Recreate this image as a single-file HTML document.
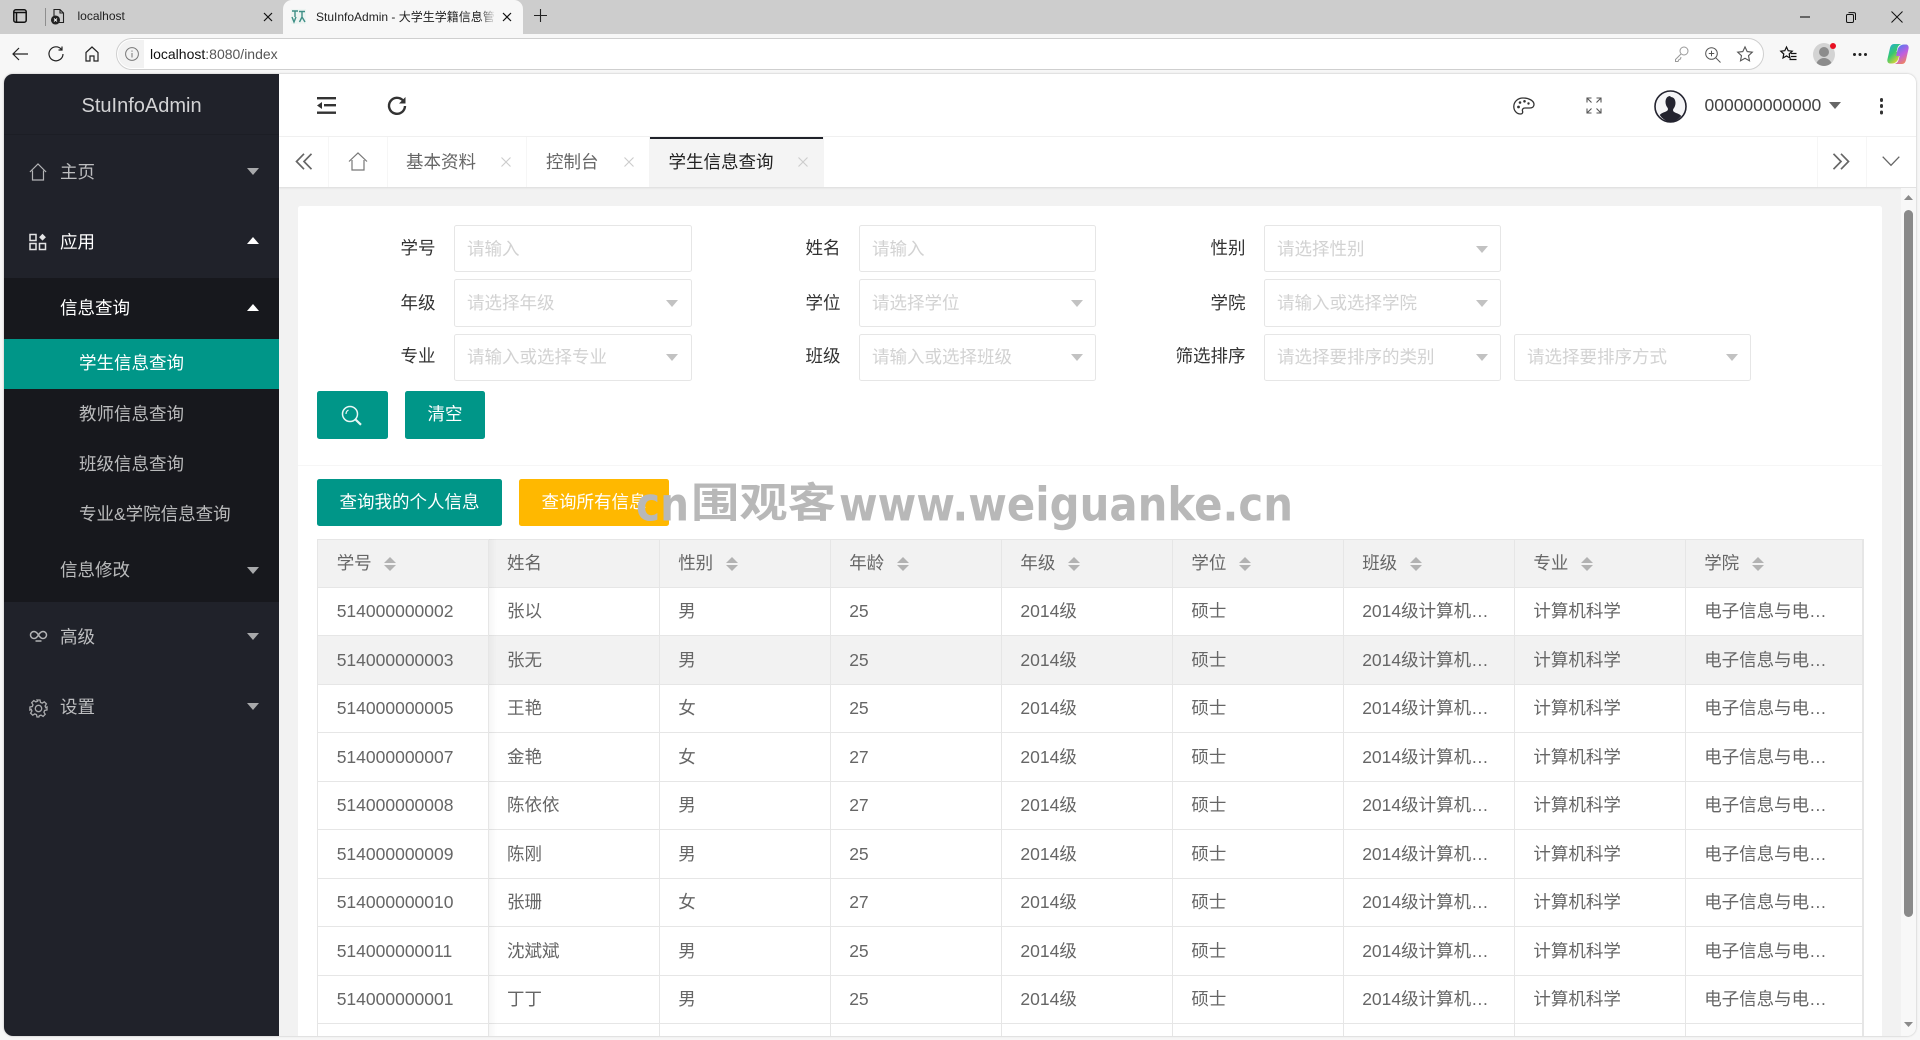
<!DOCTYPE html>
<html lang="zh-CN">
<head>
<meta charset="utf-8">
<title>StuInfoAdmin</title>
<style>
html,body{margin:0;padding:0;width:1920px;height:1040px;overflow:hidden;background:#f7f7f7}
body{font-family:"Liberation Sans","Noto Sans CJK SC",sans-serif;position:relative;color:#333}
div,span,svg{box-sizing:border-box}
.a{position:absolute}
.t{position:absolute;white-space:nowrap;line-height:24px;font-size:17.5px}
svg.i{position:absolute;overflow:visible}
.win{position:absolute;left:4px;top:74px;width:1912px;height:962px;border-radius:9px;overflow:hidden;background:#f2f2f2;box-shadow:0 0 2px rgba(0,0,0,.25)}
.in{position:absolute;left:-4px;top:-74px;width:1920px;height:1040px}
.m{color:rgba(255,255,255,.7)}
.w{color:#fff}
.up,.dn{position:absolute;width:0;height:0;border-left:6.5px solid transparent;border-right:6.5px solid transparent}
.up{border-bottom:7px solid #fff}
.dn{border-top:7px solid #a8a9ab}
.f{position:absolute;border:1px solid #e6e6e6;border-radius:2.5px;background:#fff;width:238px;height:47px}
.f.n{width:237px}
.f.h{height:48px}
.f span{position:absolute;left:12px;top:11px;line-height:24px;font-size:17.5px;color:#d2d2d2;white-space:nowrap}
.f.r3 span{top:10px}
.f i{position:absolute;right:13px;top:20px;width:0;height:0;border-left:6.5px solid transparent;border-right:6.5px solid transparent;border-top:7px solid #c2c2c2}
.f.n i{right:12px}
.f.r3 i{top:19px}
.lb{position:absolute;white-space:nowrap;line-height:24px;font-size:17.5px;color:#333;text-align:right;width:120px}
.btn{position:absolute;background:#009688;border-radius:2.5px;color:#fff;font-size:17.5px;line-height:47px;text-align:center}
.r{position:absolute;left:318px;width:1545px;border-bottom:1px solid #e6e6e6;background:#fff}
.c{position:absolute;white-space:nowrap;font-size:17.5px;line-height:24px;color:#666}
.l1{left:18.7px}.l2{left:189px}.l3{left:360.2px}.l4{left:531.2px}.l5{left:702.4px}.l6{left:873.4px}.l7{left:1044.2px}.l8{left:1215.4px}.l9{left:1386.2px}
.vl{position:absolute;top:539px;width:1px;height:497px;background:#e6e6e6}
.s{position:absolute;top:16.5px;width:12px;height:14px}
.s:before{content:"";position:absolute;left:0;top:0;border-left:6px solid transparent;border-right:6px solid transparent;border-bottom:6px solid #b2b2b2}
.s:after{content:"";position:absolute;left:0;top:8px;border-left:6px solid transparent;border-right:6px solid transparent;border-top:6px solid #b2b2b2}
</style>
</head>
<body>

<!-- browser tab strip -->
<div class="a" style="left:0;top:0;width:1920px;height:34px;background:#cdcdcd"></div>
<div class="a" style="left:283px;top:0;width:240px;height:34px;background:#f7f7f7;border-radius:9px 9px 0 0"></div>
<svg class="i" style="left:13px;top:9px" width="14" height="14" viewBox="0 0 14 14" fill="none" stroke="#111" stroke-width="1.5"><rect x=".8" y=".8" width="12.4" height="12.4" rx="2"/><path d="M.8 3.500h12.400M3.500 3.500v9.500" /></svg>
<div class="a" style="left:44.5px;top:8px;width:1px;height:18px;background:#8e8e8e"></div>
<svg class="i" style="left:51px;top:8px" width="14" height="17" viewBox="0 0 14 17" fill="none" stroke="#222" stroke-width="1.1"><path d="M3 8V1.500h6l3.500 3.500v9.500H8M9 1.500V5h3.500"/><circle cx="4.500" cy="12" r="4" fill="#222"/><path d="M3 10.500l3 3M6 10.500l-3 3" stroke="#fff" stroke-width=".9"/></svg>
<div class="a" style="left:77.5px;top:8px;font-size:12px;line-height:16px;color:#222">localhost</div>
<svg class="i" style="left:263px;top:12px" width="10" height="10" viewBox="0 0 10 10" stroke="#111" stroke-width="1.2"><path d="M1 1l8 8M9 1l-8 8"/></svg>
<div class="a" style="left:291px;top:9px;width:15px;height:15px;background:#eef4f2"></div>
<svg class="i" style="left:291px;top:9px" width="15" height="15" viewBox="0 0 15 15" fill="none" stroke="#3f8f86" stroke-width="1.400"><path d="M1 2h6M4 2v6M1 8l2 5 2-5M8 2.500h6M11 2.500v5M8.500 13l2.500-5 3 5"/></svg>
<div class="a" style="left:316px;top:9px;width:179px;height:16px;overflow:hidden;font-size:12px;line-height:16px;color:#222;white-space:nowrap">StuInfoAdmin - 大学生学籍信息管理系统</div>
<div class="a" style="left:480px;top:8px;width:16px;height:18px;background:linear-gradient(90deg,rgba(247,247,247,0),#f7f7f7)"></div>
<svg class="i" style="left:502px;top:12px" width="10" height="10" viewBox="0 0 10 10" stroke="#111" stroke-width="1.2"><path d="M1 1l8 8M9 1l-8 8"/></svg>
<svg class="i" style="left:534px;top:9px" width="13" height="13" viewBox="0 0 13 13" stroke="#222" stroke-width="1.1"><path d="M6.500 0v13M0 6.500h13"/></svg>
<svg class="i" style="left:1799px;top:16px" width="12" height="2" viewBox="0 0 12 2" stroke="#111" stroke-width="1.1"><path d="M1 1h10"/></svg>
<svg class="i" style="left:1846px;top:12px" width="10" height="11" viewBox="0 0 10 11" fill="none" stroke="#111" stroke-width="1"><rect x=".5" y="2.500" width="7" height="8" rx="1.200"/><path d="M2.500 .6h5.500a1.500 1.500 0 0 1 1.500 1.500V8"/></svg>
<svg class="i" style="left:1891px;top:11px" width="12" height="12" viewBox="0 0 12 12" stroke="#111" stroke-width="1"><path d="M.5.5l11 11M11.500.5l-11 11"/></svg>

<!-- browser toolbar -->
<svg class="i" style="left:12px;top:47px" width="16" height="14" viewBox="0 0 16 14" fill="none" stroke="#222" stroke-width="1.200"><path d="M16 7H1M7 1L1 7l6 6"/></svg>
<svg class="i" style="left:48px;top:46px" width="16" height="16" viewBox="0 0 16 16" fill="none" stroke="#222" stroke-width="1.200"><path d="M13.500 3.500A7 7 0 1 0 15 8M14 .5v3.500h-3.500"/></svg>
<svg class="i" style="left:84px;top:46px" width="16" height="16" viewBox="0 0 16 16" fill="none" stroke="#222" stroke-width="1.200"><path d="M2 6.500L8 1l6 5.500V15h-4v-5H6v5H2z"/></svg>
<div class="a" style="left:116px;top:38px;width:1648px;height:32px;background:#fff;border:1px solid #cfcfcf;border-radius:16px"></div>
<div class="a" style="left:118px;top:40px;width:26px;height:28px;background:#f2f2f2;border-radius:14px 0 0 14px"></div>
<svg class="i" style="left:125px;top:47px" width="14" height="14" viewBox="0 0 14 14" fill="none" stroke="#777" stroke-width="1"><circle cx="7" cy="7" r="6.400"/><path d="M7 6v4.500M7 3.500v1.200"/></svg>
<div class="a" style="left:150px;top:45px;font-size:14px;line-height:18px;color:#555;white-space:nowrap"><span style="color:#111">localhost</span>:8080/index</div>
<svg class="i" style="left:1674px;top:46px" width="15" height="16" viewBox="0 0 15 16" fill="none" stroke="#999" stroke-width="1"><circle cx="10" cy="5" r="4"/><path d="M7 8L1.500 13.500V15.500H4l1-2 1.500-.5.500-2"/></svg>
<svg class="i" style="left:1705px;top:47px" width="16" height="16" viewBox="0 0 16 16" fill="none" stroke="#555" stroke-width="1"><circle cx="6.500" cy="6.500" r="5.800"/><path d="M10.800 10.800L15.500 15.500M3.800 6.500h5.400M6.500 3.800v5.400"/></svg>
<svg class="i" style="left:1737px;top:46px" width="16" height="16" viewBox="0 0 16 16" fill="none" stroke="#555" stroke-width="1.100"><path d="M8 .9l2.200 4.700 5.100.6-3.800 3.500 1 5.100L8 12.300l-4.500 2.500 1-5.100L.7 6.200l5.100-.6z"/></svg>
<svg class="i" style="left:1780px;top:46px" width="17" height="16" viewBox="0 0 17 16" fill="none" stroke="#111" stroke-width="1.200"><path d="M6.500 1l1.700 3.700 4 .5-3 2.800.8 4-3.500-2-3.500 2 .8-4-3-2.800 4-.5zM11 7.500h5.500M11 10.500h5.500M9.500 13.500h7"/></svg>
<div class="a" style="left:1813px;top:43px;width:22px;height:23px;border-radius:50%;background:#d3d3d3;overflow:hidden"><div class="a" style="left:6px;top:4px;width:10px;height:10px;border-radius:50%;background:#8c8c8c"></div><div class="a" style="left:3px;top:15px;width:16px;height:12px;border-radius:8px 8px 0 0;background:#8c8c8c"></div></div>
<div class="a" style="left:1830px;top:43px;width:6px;height:6px;border-radius:50%;background:#e81123"></div>
<div class="a" style="left:1853px;top:53px;width:3px;height:3px;border-radius:50%;background:#222;box-shadow:5.500px 0 0 #222,11px 0 0 #222"></div>
<svg class="i" style="left:1887px;top:43px" width="22" height="22" viewBox="0 0 22 22">
<defs><linearGradient id="g1" x1="0" y1="0" x2="0.700" y2="1"><stop offset="0" stop-color="#1fa8e8"/><stop offset=".5" stop-color="#36c96f"/><stop offset="1" stop-color="#f6d32d"/></linearGradient><linearGradient id="g2" x1="0.300" y1="0" x2="0.800" y2="1"><stop offset="0" stop-color="#4f7df0"/><stop offset=".5" stop-color="#c05fe0"/><stop offset="1" stop-color="#f78a4c"/></linearGradient></defs>
<path d="M7 1h7.500c-2.500.5-3.700 2.500-4.200 4.500l-.8 3.500H13l-1.500 6c-.7 3-3 5.500-6.500 5.500H3c-1.800 0-3-1.800-2.600-4L3 5C3.600 2.500 5 1 7 1z" fill="url(#g1)"/>
<path d="M15 21H7.500c2.500-.5 3.700-2.500 4.200-4.500l.8-3.500H9l1.500-6c.7-3 3-5.500 6.500-5.500h2c1.800 0 3 1.800 2.600 4L19 17c-.6 2.500-2 4-4 4z" fill="url(#g2)"/></svg>

<!-- page window -->
<div class="win"><div class="in">

<!-- main header -->
<div class="a" style="left:279px;top:74px;width:1641px;height:62px;background:#fff"></div>
<div class="a" style="left:279px;top:136px;width:1641px;height:1px;background:#f2f2f2"></div>
<svg class="i" style="left:317px;top:97px" width="19" height="17" viewBox="0 0 19 17" fill="#333"><rect width="19" height="2.400"/><rect x="7" y="7" width="12" height="2.400"/><rect y="14.500" width="19" height="2.400"/><path d="M5 5v7L0 8.500z"/></svg>
<svg class="i" style="left:387px;top:96px" width="20" height="19" viewBox="0 0 20 19" fill="none" stroke="#333" stroke-width="2.400"><path d="M16 4.500A8 8 0 1 0 18 10"/><path d="M18.500 1v6.500h-6.500z" fill="#333" stroke="none"/></svg>
<svg class="i" style="left:1513px;top:97px" width="22" height="18" viewBox="0 0 22 18" fill="none" stroke="#333" stroke-width="1.300"><path d="M10 1C4.500 1 .8 5 .8 9.500S4 17 7.500 17c2 0 2.500-1.500 2-3-.5-1.500.5-3 2.500-3h5c2.500 0 4-1.500 4-3.500C21 3.500 15.500 1 10 1z"/><circle cx="5.500" cy="10" r="1.400" fill="#333" stroke="none"/><circle cx="7" cy="5.500" r="1.300" fill="#333" stroke="none"/><circle cx="11.500" cy="4.300" r="1.300" fill="#333" stroke="none"/><circle cx="15.500" cy="6.500" r="1.200" fill="#333" stroke="none"/></svg>
<svg class="i" style="left:1586px;top:97px" width="16" height="17" viewBox="0 0 16 17" fill="none" stroke="#555" stroke-width="1.100"><path d="M1 5.500V1h4.500M1 1l4.500 4.500M15 5.500V1h-4.500M15 1l-4.500 4.500M1 11.500V16h4.500M1 16l4.500-4.500M15 11.500V16h-4.500M15 16l-4.500-4.500"/></svg>
<svg class="i" style="left:1654px;top:90px" width="33" height="33" viewBox="0 0 33 33"><circle cx="16.500" cy="16.500" r="15.500" fill="#f5f5f7" stroke="#23232f" stroke-width="1.600"/><path d="M16.500 6c-3.500 0-5 2.800-5 6 0 2.500 1 4.500 2.200 6 .5 1 .3 2-.5 2.700-2 1.500-5.500 1.800-7.500 4.300A15.500 15.500 0 0 0 16.500 32a15.500 15.500 0 0 0 10.800-6c-2-2.500-5.500-2.800-7.500-4.300-.8-.7-1-1.700-.5-2.700 1.200-1.500 2.200-3.500 2.200-6 0-3.200-1.500-6-5-6z" fill="#23232f"/></svg>
<div class="t" style="left:1704.500px;top:93px;color:#444">000000000000</div>
<div class="dn" style="left:1828.500px;top:102px;border-top-color:#666"></div>
<div class="a" style="left:1879.500px;top:98px;width:3.500px;height:3.500px;border-radius:50%;background:#333;box-shadow:0 6px 0 #333,0 12.500px 0 #333"></div>

<!-- tab bar -->
<div class="a" style="left:279px;top:137px;width:1641px;height:50px;background:#fff;box-shadow:0 1px 2px rgba(0,0,0,.1)"></div>
<svg class="i" style="left:295px;top:153px" width="18" height="17" viewBox="0 0 18 17" fill="none" stroke="#666" stroke-width="1.700"><path d="M9 .8L1.500 8.500 9 16.200M16.500.8L9 8.500l7.500 7.700"/></svg>
<div class="a" style="left:328px;top:137px;width:1px;height:50px;background:#f6f6f6"></div>
<svg class="i" style="left:348px;top:152px" width="20" height="19" viewBox="0 0 20 19" fill="none" stroke="#777" stroke-width="1.200"><path d="M1 9.500L10 .9l9 8.600M4 8v10h12V8"/></svg>
<div class="a" style="left:387px;top:137px;width:1px;height:50px;background:#f6f6f6"></div>
<div class="t" style="left:406px;top:150px;color:#666">基本资料</div>
<svg class="i" style="left:501px;top:157px" width="10" height="10" viewBox="0 0 10 10" stroke="#ccc" stroke-width="1.100"><path d="M.5.5l9 9M9.500.5l-9 9"/></svg>
<div class="a" style="left:526px;top:137px;width:1px;height:50px;background:#f6f6f6"></div>
<div class="t" style="left:546px;top:150px;color:#666">控制台</div>
<svg class="i" style="left:623.500px;top:157px" width="10" height="10" viewBox="0 0 10 10" stroke="#ccc" stroke-width="1.100"><path d="M.5.5l9 9M9.500.5l-9 9"/></svg>
<div class="a" style="left:649px;top:137px;width:175px;height:50px;background:#f4f4f4"></div>
<div class="a" style="left:650px;top:137px;width:173px;height:2px;background:#20222a"></div>
<div class="t" style="left:668.500px;top:150px;color:#222">学生信息查询</div>
<svg class="i" style="left:798px;top:157px" width="10" height="10" viewBox="0 0 10 10" stroke="#ccc" stroke-width="1.100"><path d="M.5.5l9 9M9.500.5l-9 9"/></svg>
<div class="a" style="left:1817px;top:137px;width:1px;height:50px;background:#f6f6f6"></div>
<svg class="i" style="left:1832px;top:153px" width="18" height="17" viewBox="0 0 18 17" fill="none" stroke="#666" stroke-width="1.700"><path d="M1.500.8L9 8.500 1.500 16.200M9 .8l7.500 7.700L9 16.200"/></svg>
<div class="a" style="left:1866px;top:137px;width:1px;height:50px;background:#f6f6f6"></div>
<svg class="i" style="left:1882px;top:156px" width="18" height="10" viewBox="0 0 18 10" fill="none" stroke="#666" stroke-width="1.300"><path d="M.7.7L9 9.300 17.300.7"/></svg>

<!-- sidebar -->
<div class="a" style="left:4px;top:74px;width:275px;height:962px;background:#20222a"></div>
<div class="a" style="left:4px;top:134px;width:275px;height:1px;background:#1c1e25"></div>
<div class="a" style="left:4px;top:278px;width:275px;height:324px;background:#17181d"></div>
<div class="a" style="left:4px;top:339px;width:275px;height:50px;background:#009688"></div>
<div class="a" style="left:81.500px;top:94px;font-size:20px;line-height:24px;color:rgba(255,255,255,.8);white-space:nowrap">StuInfoAdmin</div>

<svg class="i" style="left:29px;top:163px" width="18" height="18" viewBox="0 0 18 18" fill="none" stroke="#b3b4b6" stroke-width="1.200"><path d="M.9 9L9 1l8.100 8M3.500 7.500V17h11V7.500"/></svg>
<div class="t m" style="left:60px;top:160px">主页</div>
<div class="dn" style="left:246.500px;top:168px"></div>

<svg class="i" style="left:29px;top:233px" width="18" height="18" viewBox="0 0 18 18" fill="none" stroke="#e4e4e5" stroke-width="1.500"><rect x="1" y="1.500" width="6" height="6"/><rect x="1" y="10.500" width="6" height="6"/><rect x="10.500" y="10.500" width="6" height="6"/><path d="M13.500 .8l3.400 3.400-3.400 3.400-3.400-3.400z" fill="#e4e4e5" stroke="none"/></svg>
<div class="t w" style="left:60px;top:230px">应用</div>
<div class="up" style="left:246.500px;top:237px"></div>

<div class="t w" style="left:60px;top:295.500px">信息查询</div>
<div class="up" style="left:246.500px;top:304px"></div>
<div class="t w" style="left:79px;top:351px">学生信息查询</div>
<div class="t m" style="left:79px;top:401.500px">教师信息查询</div>
<div class="t m" style="left:79px;top:451.500px">班级信息查询</div>
<div class="t m" style="left:79px;top:501.500px">专业&amp;学院信息查询</div>
<div class="t m" style="left:60px;top:557.500px">信息修改</div>
<div class="dn" style="left:246.500px;top:567px"></div>

<svg class="i" style="left:29.500px;top:630px" width="17" height="12" viewBox="0 0 17 12" fill="none" stroke="#b3b4b6" stroke-width="1.500"><path d="M8.500 5C7 2.500 5.500 1.500 4 1.500a3.500 3.500 0 0 0 0 7c1.500 0 3-1 4.500-3.500 1.500-2.500 3-3.500 4.500-3.500a3.500 3.500 0 0 1 0 7c-1.500 0-3-1-4.500-3.500zM5.500 11h6"/></svg>
<div class="t m" style="left:60px;top:625px">高级</div>
<div class="dn" style="left:246.500px;top:633px"></div>

<svg class="i" style="left:28.500px;top:698.500px" width="19" height="19" viewBox="0 0 19 19" fill="none" stroke="#a9aaac" stroke-width="1.300"><path d="M8 1h3l.5 2.400 1.700.7 2.100-1.300 2.100 2.100-1.300 2.100.7 1.700L18 8v3l-2.400.5-.7 1.700 1.300 2.100-2.100 2.100-2.100-1.300-1.700.7L9.900 18H8l-.5-2.400-1.700-.7-2.100 1.300-2.100-2.100 1.300-2.100-.7-1.700L.9 11V8l2.400-.5.7-1.700-1.300-2.100 2.100-2.100 2.100 1.300 1.700-.7z"/><circle cx="9.500" cy="9.500" r="3.200"/></svg>
<div class="t m" style="left:60px;top:695px">设置</div>
<div class="dn" style="left:246.500px;top:703px"></div>

<!-- card -->
<div class="a" style="left:298px;top:206px;width:1584px;height:840px;background:#fff;border-radius:2.500px"></div>
<div class="a" style="left:298px;top:465px;width:1584px;height:1px;background:#f6f6f6"></div>

<!-- form -->
<div class="lb" style="left:315.500px;top:236px">学号</div>
<div class="f" style="left:454px;top:225px"><span>请输入</span></div>
<div class="lb" style="left:720.500px;top:236px">姓名</div>
<div class="f n" style="left:859px;top:225px"><span>请输入</span></div>
<div class="lb" style="left:1125.500px;top:236px">性别</div>
<div class="f n" style="left:1264px;top:225px"><span>请选择性别</span><i></i></div>

<div class="lb" style="left:315.500px;top:290.500px">年级</div>
<div class="f h" style="left:454px;top:279px"><span>请选择年级</span><i></i></div>
<div class="lb" style="left:720.500px;top:290.500px">学位</div>
<div class="f n h" style="left:859px;top:279px"><span>请选择学位</span><i></i></div>
<div class="lb" style="left:1125.500px;top:290.500px">学院</div>
<div class="f n h" style="left:1264px;top:279px"><span>请输入或选择学院</span><i></i></div>

<div class="lb" style="left:315.500px;top:344px">专业</div>
<div class="f r3" style="left:454px;top:334px"><span>请输入或选择专业</span><i></i></div>
<div class="lb" style="left:720.500px;top:344px">班级</div>
<div class="f n r3" style="left:859px;top:334px"><span>请输入或选择班级</span><i></i></div>
<div class="lb" style="left:1125.500px;top:344px">筛选排序</div>
<div class="f n r3" style="left:1264px;top:334px"><span>请选择要排序的类别</span><i></i></div>
<div class="f n r3" style="left:1514px;top:334px"><span>请选择要排序方式</span><i></i></div>

<div class="btn" style="left:317px;top:391px;width:71px;height:48px"></div>
<svg class="i" style="left:341px;top:405px" width="22" height="21" viewBox="0 0 22 21" fill="none" stroke="#e8f7f5" stroke-width="1.500"><circle cx="9" cy="9" r="7.500"/><path d="M14.500 14.500L20 19.800" stroke-width="2.200"/><path d="M5 9a4.500 4.500 0 0 1 2.500-4" stroke-width="1.200"/></svg>
<div class="btn" style="left:405px;top:391px;width:80px;height:48px">清空</div>
<div class="btn" style="left:317px;top:479px;width:185px;height:47px">查询我的个人信息</div>
<div class="btn" style="left:519px;top:479px;width:150px;height:47px;background:#ffb800">查询所有信息</div>

<!-- table -->
<div class="a" style="left:317px;top:539px;width:1547px;height:497px;background:#fff;border:1px solid #e6e6e6;border-bottom:0"></div>
<div class="r" style="top:540px;height:48px;background:#f2f2f2">
<span class="c l1" style="top:11px">学号</span><span class="s" style="left:65.800px"></span>
<span class="c l2" style="top:11px">姓名</span>
<span class="c l3" style="top:11px">性别</span><span class="s" style="left:407.800px"></span>
<span class="c l4" style="top:11px">年龄</span><span class="s" style="left:578.800px"></span>
<span class="c l5" style="top:11px">年级</span><span class="s" style="left:750px"></span>
<span class="c l6" style="top:11px">学位</span><span class="s" style="left:921px"></span>
<span class="c l7" style="top:11px">班级</span><span class="s" style="left:1091.800px"></span>
<span class="c l8" style="top:11px">专业</span><span class="s" style="left:1263px"></span>
<span class="c l9" style="top:11px">学院</span><span class="s" style="left:1433.800px"></span>
</div>
<div class="r" style="top:588px;height:48px"><span class="c l1" style="top:11px">514000000002</span><span class="c l2" style="top:11px">张以</span><span class="c l3" style="top:11px">男</span><span class="c l4" style="top:11px">25</span><span class="c l5" style="top:11px">2014级</span><span class="c l6" style="top:11px">硕士</span><span class="c l7" style="top:11px">2014级计算机…</span><span class="c l8" style="top:11px">计算机科学</span><span class="c l9" style="top:11px">电子信息与电…</span></div>
<div class="r" style="top:636px;height:49px;background:#f2f2f2"><span class="c l1" style="top:12px">514000000003</span><span class="c l2" style="top:12px">张无</span><span class="c l3" style="top:12px">男</span><span class="c l4" style="top:12px">25</span><span class="c l5" style="top:12px">2014级</span><span class="c l6" style="top:12px">硕士</span><span class="c l7" style="top:12px">2014级计算机…</span><span class="c l8" style="top:12px">计算机科学</span><span class="c l9" style="top:12px">电子信息与电…</span></div>
<div class="r" style="top:685px;height:48px"><span class="c l1" style="top:11px">514000000005</span><span class="c l2" style="top:11px">王艳</span><span class="c l3" style="top:11px">女</span><span class="c l4" style="top:11px">25</span><span class="c l5" style="top:11px">2014级</span><span class="c l6" style="top:11px">硕士</span><span class="c l7" style="top:11px">2014级计算机…</span><span class="c l8" style="top:11px">计算机科学</span><span class="c l9" style="top:11px">电子信息与电…</span></div>
<div class="r" style="top:733px;height:49px"><span class="c l1" style="top:12px">514000000007</span><span class="c l2" style="top:12px">金艳</span><span class="c l3" style="top:12px">女</span><span class="c l4" style="top:12px">27</span><span class="c l5" style="top:12px">2014级</span><span class="c l6" style="top:12px">硕士</span><span class="c l7" style="top:12px">2014级计算机…</span><span class="c l8" style="top:12px">计算机科学</span><span class="c l9" style="top:12px">电子信息与电…</span></div>
<div class="r" style="top:782px;height:48px"><span class="c l1" style="top:11px">514000000008</span><span class="c l2" style="top:11px">陈依依</span><span class="c l3" style="top:11px">男</span><span class="c l4" style="top:11px">27</span><span class="c l5" style="top:11px">2014级</span><span class="c l6" style="top:11px">硕士</span><span class="c l7" style="top:11px">2014级计算机…</span><span class="c l8" style="top:11px">计算机科学</span><span class="c l9" style="top:11px">电子信息与电…</span></div>
<div class="r" style="top:830px;height:49px"><span class="c l1" style="top:12px">514000000009</span><span class="c l2" style="top:12px">陈刚</span><span class="c l3" style="top:12px">男</span><span class="c l4" style="top:12px">25</span><span class="c l5" style="top:12px">2014级</span><span class="c l6" style="top:12px">硕士</span><span class="c l7" style="top:12px">2014级计算机…</span><span class="c l8" style="top:12px">计算机科学</span><span class="c l9" style="top:12px">电子信息与电…</span></div>
<div class="r" style="top:879px;height:48px"><span class="c l1" style="top:11px">514000000010</span><span class="c l2" style="top:11px">张珊</span><span class="c l3" style="top:11px">女</span><span class="c l4" style="top:11px">27</span><span class="c l5" style="top:11px">2014级</span><span class="c l6" style="top:11px">硕士</span><span class="c l7" style="top:11px">2014级计算机…</span><span class="c l8" style="top:11px">计算机科学</span><span class="c l9" style="top:11px">电子信息与电…</span></div>
<div class="r" style="top:927px;height:49px"><span class="c l1" style="top:12px">514000000011</span><span class="c l2" style="top:12px">沈斌斌</span><span class="c l3" style="top:12px">男</span><span class="c l4" style="top:12px">25</span><span class="c l5" style="top:12px">2014级</span><span class="c l6" style="top:12px">硕士</span><span class="c l7" style="top:12px">2014级计算机…</span><span class="c l8" style="top:12px">计算机科学</span><span class="c l9" style="top:12px">电子信息与电…</span></div>
<div class="r" style="top:976px;height:48px"><span class="c l1" style="top:11px">514000000001</span><span class="c l2" style="top:11px">丁丁</span><span class="c l3" style="top:11px">男</span><span class="c l4" style="top:11px">25</span><span class="c l5" style="top:11px">2014级</span><span class="c l6" style="top:11px">硕士</span><span class="c l7" style="top:11px">2014级计算机…</span><span class="c l8" style="top:11px">计算机科学</span><span class="c l9" style="top:11px">电子信息与电…</span></div>

<div class="a" style="left:489px;top:539px;width:8px;height:497px;background:linear-gradient(90deg,rgba(0,0,0,.035),rgba(0,0,0,0))"></div>
<div class="vl" style="left:488px"></div>
<div class="vl" style="left:659px"></div>
<div class="vl" style="left:830px"></div>
<div class="vl" style="left:1001px"></div>
<div class="vl" style="left:1172px"></div>
<div class="vl" style="left:1343px"></div>
<div class="vl" style="left:1514px"></div>
<div class="vl" style="left:1685px"></div>
<div class="vl" style="left:1862px"></div>

<!-- page scrollbar -->
<div class="a" style="left:1901px;top:188px;width:15px;height:848px;background:#f8f8f8"></div>
<div class="a" style="left:1904px;top:210px;width:9px;height:707px;background:#8a8a8a;border-radius:5px"></div>
<svg class="i" style="left:1904px;top:195px" width="9" height="5" viewBox="0 0 9 5"><path d="M4.500 0L9 5H0z" fill="#8a8a8a"/></svg>
<svg class="i" style="left:1904px;top:1022px" width="9" height="5" viewBox="0 0 9 5"><path d="M0 0h9L4.500 5z" fill="#8a8a8a"/></svg>

</div></div>

<!-- watermark -->
<svg class="i" style="left:0;top:0" width="1920" height="1040" viewBox="0 0 1920 1040">
<g fill="#b8b8b8" font-weight="700">
<text x="636" y="520.500" font-family="'DejaVu Sans',sans-serif" font-size="46" textLength="53" lengthAdjust="spacingAndGlyphs">cn</text>
<text x="691" y="517" font-family="'Noto Sans CJK SC',sans-serif" font-size="41" textLength="145" lengthAdjust="spacingAndGlyphs">围观客</text>
<text x="839" y="520.500" font-family="'DejaVu Sans',sans-serif" font-size="46" textLength="454" lengthAdjust="spacingAndGlyphs">www.weiguanke.cn</text>
</g>
</svg>

</body>
</html>
